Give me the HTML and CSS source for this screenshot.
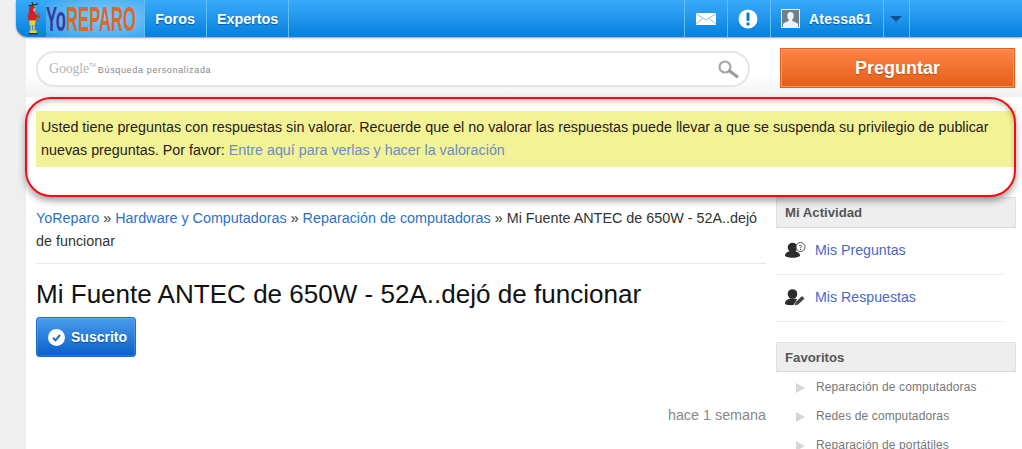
FILE: index.html
```html
<!DOCTYPE html>
<html lang="es">
<head>
<meta charset="utf-8">
<title>YoReparo</title>
<link rel="stylesheet" href="styles.css">
</head>
<body>
<div class="page">
  <nav class="nav">
    <a class="brand">
      <svg class="mascot" width="15" height="33" viewBox="0 0 17 34" preserveAspectRatio="none">
        <path d="M7 0l1 5M3 4l11-2" stroke="#333" stroke-width="1.400" fill="none"/>
        <path d="M4 5c2-2 5-1 6 1 1 2 0 5-1 6h-5c-1-2-1-5 0-7z" fill="#c9202a"/>
        <path d="M9 6l2 1-1 3-2-1z" fill="#eab48a"/>
        <path d="M3 11h7l2 3-1 5H3c-1-3-1-5 0-8z" fill="#d8201f"/>
        <path d="M4 19h7l-1 5H4z" fill="#f2d21e"/>
        <path d="M10 13l6 1v2l-6 1z" fill="#d8201f"/>
        <path d="M13 11h2v9h-2z" fill="#8a6a4a"/>
        <path d="M5 24h2v5H5zM8 24h2v5H8z" fill="#eab48a"/>
        <path d="M4 29h4v4H4zM8 29h4v4H8z" fill="#f2d21e"/>
        <path d="M3 32h5v1.500H3zM8 32h5v1.500H8z" fill="#222a70"/>
      </svg>
      <span class="wordmark"><span class="wordmark-text"><span class="yo">Yo</span><span class="rep">REPARO</span></span></span>
    </a>
    <a class="nav-item foros">Foros</a>
    <a class="nav-item expertos">Expertos</a>
    <div class="nav-spacer"></div>
    <a class="nav-item icon mail">
      <svg width="20" height="12" viewBox="0 0 21 14" preserveAspectRatio="none"><rect width="21" height="14" fill="#fff"/><path d="M0 1l10.500 7L21 1M0 13l7-6.500M21 13l-7-6.500" stroke="#7fb6e0" stroke-width="1" fill="none"/></svg>
    </a>
    <a class="nav-item icon alert-ic">
      <svg width="20" height="20" viewBox="0 0 20 20"><circle cx="10" cy="10" r="9.500" fill="#fff"/><rect x="8.500" y="3.500" width="3" height="8.500" rx="1" fill="#0a78d0"/><circle cx="10" cy="15" r="1.700" fill="#0a78d0"/></svg>
    </a>
    <a class="nav-item user">
      <svg class="avatar" width="19" height="19" viewBox="0 0 19 19"><rect width="19" height="19" fill="#eef2f5"/><rect x="1" y="1" width="17" height="17" fill="#6f7f8c"/><path d="M9.500 3c2.300 0 3.400 1.800 3.200 4-.1 1.600-.8 3-1.400 3.600v1.400c1.500.8 4.700 1.500 5.700 3v3H2v-3c1-1.500 4.200-2.200 5.700-3v-1.400C7.100 10 6.400 8.600 6.300 7 6.100 4.800 7.200 3 9.500 3z" fill="#eef2f5"/></svg>
      <span>Atessa61</span>
    </a>
    <a class="nav-item caret-item"><span class="caret"></span></a>
  </nav>

  <main class="sheet">
    <div class="top">
      <div class="search">
        <span class="google">Google<sup>TM</sup></span>
        <span class="search-label">Búsqueda personalizada</span>
        <svg class="lens" width="22" height="20" viewBox="0 0 22 20"><circle cx="8" cy="8" r="5.500" fill="#fff" stroke="#a8a8a8" stroke-width="2.200"/><path d="M12.500 12l7.500 5.500" stroke="#9a9a9a" stroke-width="3" stroke-linecap="round"/></svg>
      </div>
      <a class="ask">Preguntar</a>
    </div>

    <div class="notice-wrap">
      <p class="notice">Usted tiene preguntas con respuestas sin valorar. Recuerde que el no valorar las respuestas puede llevar a que se suspenda su privilegio de publicar nuevas preguntas. Por favor: <a>Entre aquí para verlas y hacer la valoración</a></p>
      <div class="ring"></div>
    </div>

    <div class="columns">
      <section class="content">
        <div class="crumbs"><a>YoReparo</a> » <a>Hardware y Computadoras</a> » <a>Reparación de computadoras</a> » Mi Fuente ANTEC de 650W - 52A..dejó de funcionar</div>
        <h1 class="title">Mi Fuente ANTEC de 650W - 52A..dejó de funcionar</h1>
        <a class="follow">
          <svg width="17" height="17" viewBox="0 0 17 17"><circle cx="8.500" cy="8.500" r="8.500" fill="#fff"/><path d="M5 8.800l2.500 2.500L12 6" stroke="#1c70c8" stroke-width="2" fill="none"/></svg>
          <span>Suscrito</span>
        </a>
        <div class="time">hace 1 semana</div>
      </section>

      <aside class="side">
        <h3 class="side-head">Mi Actividad</h3>
        <a class="act">
          <svg width="21" height="16" viewBox="0 0 21 16"><circle cx="7.500" cy="5.500" r="4.800" fill="#2b2b2b"/><path d="M0 14c0-3.500 3-5 7.500-5s7.500 1.500 7.500 5c-3 2.400-12 2.400-15 0z" fill="#2b2b2b"/><circle cx="15.500" cy="5" r="4.500" fill="#fff" stroke="#555" stroke-width="1"/><path d="M14.300 3.600c1-.9 2.700 0 2 1.300-.4.500-.8.600-.8 1.300M15.500 7v1" stroke="#555" fill="none"/></svg>
          <span>Mis Preguntas</span>
        </a>
        <a class="act">
          <svg width="21" height="17" viewBox="0 0 21 17"><circle cx="7.500" cy="5" r="4.800" fill="#2b2b2b"/><path d="M0 15c0-4 3-5.500 7.500-5.500 2 0 3.500.3 4.500 1l-3.500 5.500c-3 .3-6.500 .2-8.500-1z" fill="#2b2b2b"/><path d="M9.500 16.500l1.200-3.500 6.300-6 2.500 2.500-6.300 6z" fill="#444"/></svg>
          <span>Mis Respuestas</span>
        </a>
        <h3 class="side-head fav">Favoritos</h3>
        <ul class="favs">
          <li>Reparación de computadoras</li>
          <li>Redes de computadoras</li>
          <li>Reparación de portátiles</li>
        </ul>
      </aside>
    </div>
  </main>
</div>
</body>
</html>
```

FILE: styles.css
```css
html, body { margin: 0; height: 449px; overflow: hidden; }
body {
  background: #efefef;
  font-family: "Liberation Sans", Arial, sans-serif;
  font-size: 14.350px;
  color: #222;
}
a { text-decoration: none; cursor: pointer; }
.page { margin-left: 16px; }

.nav {
  display: flex;
  height: 37px;
  background: linear-gradient(#3aaafa, #0580dc);
  border-bottom-left-radius: 12px;
  box-shadow: 0 1px 2px rgba(0, 40, 90, .45);
  position: relative;
  z-index: 2;
}
.brand {
  width: 129px;
  flex: none;
  display: flex;
  align-items: center;
  padding-left: 10px;
  box-sizing: border-box;
  border-right: 1px solid #5ec0ee;
}
.mascot { flex: none; margin-top: -1px; }
.wordmark {
  display: block;
  margin-left: 5px;
  width: 98px;
  height: 37px;
  background: radial-gradient(ellipse at 60% 45%, #7ccafb 0, #58b6f6 55%, #2c9ef0 100%);
  overflow: hidden;
}
.wordmark-text {
  display: inline-block;
  font-weight: 700;
  font-size: 26px;
  line-height: 37px;
  white-space: nowrap;
  transform: translate(0, 1px) scale(.64, 1.350);
  transform-origin: left center;
}
.yo { color: #3a3a9c; }
.rep { color: #d9682a; }
.nav-item {
  display: flex;
  align-items: center;
  justify-content: center;
  box-sizing: border-box;
  border-right: 1px solid #5ec0ee;
  color: #fff;
  font-weight: 700;
  font-size: 14.300px;
  text-shadow: 0 1px 1px rgba(0, 50, 110, .6);
}
.foros { width: 62px; padding-right: 1px; }
.expertos { width: 82px; }
.nav-spacer { width: 395px; border-right: 1px solid #5ec0ee; }
.mail { width: 43px; padding-right: 1px; }
.alert-ic { width: 43px; padding-right: 2px; }
.user { width: 113px; gap: 9px; justify-content: flex-start; padding-left: 10px; font-size: 14px; letter-spacing: .2px; }
.avatar { flex: none; }
.caret-item { width: 26px; padding-right: 2px; }
.caret {
  width: 0;
  height: 0;
  border-left: 6px solid transparent;
  border-right: 6px solid transparent;
  border-top: 6px solid #14509a;
}

.sheet {
  margin-left: 10px;
  height: 412px;
  background: #fff;
  padding-left: 10px;
}
.top {
  display: flex;
  align-items: center;
  height: 60px;
  margin-left: -10px;
  padding-left: 10px;
  background: linear-gradient(#fff 0, #fff 60%, #f1f1f1 100%);
}
.search {
  width: 714px;
  height: 36px;
  margin-top: 4px;
  box-sizing: border-box;
  border: 2px solid #e6e6e6;
  border-radius: 18px;
  background: #fff;
  display: flex;
  align-items: center;
  padding-left: 11px;
  position: relative;
}
.google {
  font-family: "Liberation Serif", serif;
  font-size: 14px;
  color: #b4b4b4;
  letter-spacing: -.2px;
}
.google sup { font-size: 5px; font-family: "Liberation Sans", sans-serif; vertical-align: 6px; line-height: 0; }
.search-label { font-size: 9px; color: #888; margin-left: 2px; margin-top: 2px; letter-spacing: .65px; }
.lens { position: absolute; right: 9px; top: 6px; }
.ask {
  margin-left: 30px;
  width: 235px;
  height: 40px;
  margin-top: 2px;
  box-sizing: border-box;
  border: 1px solid #de5f1e;
  box-shadow: inset 0 0 0 1px #fb9a62;
  background: linear-gradient(#ff8446, #e45e18);
  color: #fff;
  font-weight: 700;
  font-size: 18px;
  line-height: 38px;
  text-align: center;
  text-shadow: 0 1px 1px rgba(120, 50, 0, .5);
}

.notice-wrap {
  position: relative;
  height: 99px;
  padding-top: 14px;
  box-sizing: border-box;
}
.notice {
  margin: 0;
  width: 980px;
  height: 56px;
  box-sizing: border-box;
  background: #f2f297;
  padding: 5px 5px;
  font-size: 14.320px;
  line-height: 23px;
  color: #2a1a1a;
}
.notice a { color: #6d8cc4; }
.ring {
  position: absolute;
  left: -11px;
  top: 0;
  width: 991px;
  height: 100px;
  box-sizing: border-box;
  border: 2px solid #f60a14;
  border-radius: 26px;
  box-shadow: 0 4px 7px rgba(0, 0, 0, .36), inset 0 3px 5px rgba(0, 0, 0, .2);
  pointer-events: none;
}

.columns { display: flex; gap: 10px; width: 980px; }
.content { width: 730px; padding-top: 11px; }
.crumbs {
  line-height: 23px;
  padding-bottom: 10px;
  border-bottom: 1px solid #e8e8e8;
  color: #333;
}
.crumbs a { color: #2a72c8; }
.title {
  margin: 15px 0 0;
  font-size: 26.050px;
  line-height: 30px;
  font-weight: 400;
  color: #111;
}
.follow {
  margin-top: 8px;
  width: 100px;
  height: 40px;
  box-sizing: border-box;
  display: flex;
  align-items: center;
  gap: 6px;
  padding-left: 11px;
  border: 1px solid #1a70c8;
  border-radius: 3px;
  background: linear-gradient(#4a9bee, #0a60c8);
  box-shadow: inset 0 0 0 1px rgba(255, 255, 255, .12);
  color: #fff;
  font-weight: 700;
  font-size: 14px;
  text-shadow: 0 1px 1px rgba(0, 40, 100, .5);
}
.time {
  margin-top: 50px;
  text-align: right;
  color: #888;
  line-height: 16px;
}

.side { width: 240px; padding-top: 1px; }
.side-head {
  margin: 0;
  height: 31px;
  box-sizing: border-box;
  background: #eee;
  border: 1px solid #e2e2e2;
  border-bottom-color: #d8d8d8;
  padding-left: 8px;
  font-size: 13.200px;
  line-height: 29px;
  color: #555;
}
.act {
  display: flex;
  align-items: center;
  gap: 9px;
  height: 47px;
  width: 229px;
  box-sizing: border-box;
  padding: 0 0 2px 9px;
  border-bottom: 1px solid #ececec;
  color: #4a68cc;
  font-size: 14.200px;
}
.fav { margin-top: 20px; height: 30px; line-height: 29px; }
.favs {
  list-style: none;
  margin: 0;
  padding: 1px 0 0;
}
.favs li {
  height: 29px;
  line-height: 29px;
  padding-left: 40px;
  font-size: 12px;
  letter-spacing: .12px;
  color: #777;
  position: relative;
}
.favs li::before {
  content: "";
  position: absolute;
  left: 20px;
  top: 10px;
  border-left: 9px solid #d6d6d6;
  border-top: 5px solid transparent;
  border-bottom: 5px solid transparent;
}
```
